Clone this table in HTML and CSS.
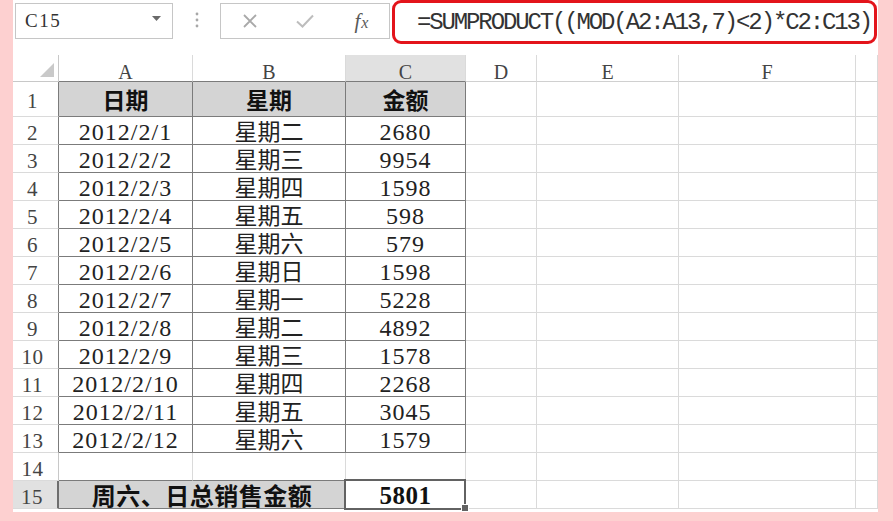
FILE: index.html
```html
<!DOCTYPE html>
<html lang="zh-CN">
<head>
<meta charset="utf-8">
<title>SUMPRODUCT</title>
<link rel="stylesheet" href="styles.css">
</head>
<body>
<div class="frame">
  <div class="panel">
    <div class="fbar">
      <div class="namebox"><span>C15</span><svg class="tri" width="9" height="5" viewBox="0 0 9 5"><polygon points="0,0 9,0 4.5,5" fill="#6a6a6a"/></svg></div>
      <div class="sep"><svg width="4" height="42" viewBox="0 0 4 42"><circle cx="2" cy="14" r="1.4" fill="#a8a8a8"/><circle cx="2" cy="20" r="1.4" fill="#a8a8a8"/><circle cx="2" cy="26" r="1.4" fill="#a8a8a8"/></svg></div>
      <div class="btns">
        <span class="btn"><svg width="16" height="16" viewBox="0 0 16 16"><path d="M2 2 L14 14 M14 2 L2 14" stroke="#a9a9a9" stroke-width="1.8" fill="none"/></svg></span>
        <span class="btn"><svg width="18" height="14" viewBox="0 0 18 14"><path d="M1 7.5 L6.5 12.5 L17 1.5" stroke="#bdbdbd" stroke-width="2" fill="none"/></svg></span>
        <span class="btn fx"><i class="f">f</i><i class="x">x</i></span>
      </div>
      <div class="formula">=SUMPRODUCT((MOD(A2:A13,7)&lt;2)*C2:C13)</div>
    </div>
    <div class="sheet">
      <div class="c corner"><svg width="14" height="14" viewBox="0 0 14 14"><polygon points="14,0 14,14 0,14" fill="#c9c9c9"/></svg></div>
      <div class="c ch tt">A</div><div class="c ch tt">B</div><div class="c ch tt csel">C</div><div class="c ch">D</div><div class="c ch">E</div><div class="c ch">F</div><div class="c ch"></div>

      <div class="c rh tl">1</div><div class="c t hd cn">日期</div><div class="c t hd cn">星期</div><div class="c t hd cn">金额</div><div class="c"></div><div class="c"></div><div class="c"></div><div class="c"></div>

      <div class="c rh tl">2</div><div class="c t num">2012/2/1</div><div class="c t cn">星期二</div><div class="c t num">2680</div><div class="c"></div><div class="c"></div><div class="c"></div><div class="c"></div>
      <div class="c rh tl">3</div><div class="c t num">2012/2/2</div><div class="c t cn">星期三</div><div class="c t num">9954</div><div class="c"></div><div class="c"></div><div class="c"></div><div class="c"></div>
      <div class="c rh tl">4</div><div class="c t num">2012/2/3</div><div class="c t cn">星期四</div><div class="c t num">1598</div><div class="c"></div><div class="c"></div><div class="c"></div><div class="c"></div>
      <div class="c rh tl">5</div><div class="c t num">2012/2/4</div><div class="c t cn">星期五</div><div class="c t num">598</div><div class="c"></div><div class="c"></div><div class="c"></div><div class="c"></div>
      <div class="c rh tl">6</div><div class="c t num">2012/2/5</div><div class="c t cn">星期六</div><div class="c t num">579</div><div class="c"></div><div class="c"></div><div class="c"></div><div class="c"></div>
      <div class="c rh tl">7</div><div class="c t num">2012/2/6</div><div class="c t cn">星期日</div><div class="c t num">1598</div><div class="c"></div><div class="c"></div><div class="c"></div><div class="c"></div>
      <div class="c rh tl">8</div><div class="c t num">2012/2/7</div><div class="c t cn">星期一</div><div class="c t num">5228</div><div class="c"></div><div class="c"></div><div class="c"></div><div class="c"></div>
      <div class="c rh tl">9</div><div class="c t num">2012/2/8</div><div class="c t cn">星期二</div><div class="c t num">4892</div><div class="c"></div><div class="c"></div><div class="c"></div><div class="c"></div>
      <div class="c rh tl">10</div><div class="c t num">2012/2/9</div><div class="c t cn">星期三</div><div class="c t num">1578</div><div class="c"></div><div class="c"></div><div class="c"></div><div class="c"></div>
      <div class="c rh tl">11</div><div class="c t num">2012/2/10</div><div class="c t cn">星期四</div><div class="c t num">2268</div><div class="c"></div><div class="c"></div><div class="c"></div><div class="c"></div>
      <div class="c rh tl">12</div><div class="c t num">2012/2/11</div><div class="c t cn">星期五</div><div class="c t num">3045</div><div class="c"></div><div class="c"></div><div class="c"></div><div class="c"></div>
      <div class="c rh tl">13</div><div class="c t num">2012/2/12</div><div class="c t cn">星期六</div><div class="c t num">1579</div><div class="c"></div><div class="c"></div><div class="c"></div><div class="c"></div>

      <div class="c rh">14</div><div class="c bb"></div><div class="c bb"></div><div class="c"></div><div class="c"></div><div class="c"></div><div class="c"></div><div class="c"></div>

      <div class="c rh rsel">15</div><div class="c t hd cn total">周六、日总销售金额</div><div class="c sum">5801</div><div class="c"></div><div class="c"></div><div class="c"></div><div class="c"></div>
    </div>
  </div>
</div>
</body>
</html>
```
FILE: styles.css
```css
body {
  margin: 0;
  background: #fdd0d0;
}

.frame {
  width: 893px;
  height: 521px;
  box-sizing: border-box;
  padding-left: 13px;
  display: flex;
}

.panel {
  width: 865px;
  height: 512px;
  background: #ffffff;
  display: flex;
  flex-direction: column;
}

/* formula bar */
.fbar {
  flex: none;
  height: 55px;
  display: flex;
  align-items: flex-start;
}

.namebox {
  margin: 3px 0 0 2px;
  width: 158px;
  height: 36px;
  box-sizing: border-box;
  border: 1px solid #c6c6c6;
  display: flex;
  align-items: center;
  justify-content: space-between;
  padding: 0 11px 0 9px;
  font: 19px "Liberation Serif", serif;
  letter-spacing: 1.5px;
  color: #333333;
}

.tri {
  margin-bottom: 6px;
}

.sep {
  width: 47px;
  height: 42px;
  display: flex;
  justify-content: center;
}

.btns {
  margin-top: 3px;
  width: 170px;
  height: 36px;
  box-sizing: border-box;
  border: 1px solid #c6c6c6;
  padding-left: 1px;
  display: flex;
  align-items: center;
}

.btn {
  width: 56px;
  display: flex;
  justify-content: center;
  align-items: center;
}

.fx {
  font-family: "Liberation Serif", serif;
  color: #595959;
  align-items: baseline;
  padding-left: 2px;
}

.fx .f {
  font-size: 21px;
}

.fx .x {
  font-size: 16px;
  margin-left: 1px;
}

.formula {
  margin-left: 2px;
  width: 485px;
  height: 44px;
  box-sizing: border-box;
  border: 3px solid #e3141b;
  border-radius: 9px;
  display: flex;
  align-items: center;
  padding-left: 22px;
  font: 24px "Liberation Mono", monospace;
  letter-spacing: -2.13px;
  color: #333333;
  white-space: nowrap;
  overflow: hidden;
}

/* sheet grid */
.sheet {
  display: grid;
  grid-template-columns: 46px 134px 153px 120px 71px 142px 177px 22px;
  grid-template-rows: 27px 35px repeat(14, 28px);
}

.c {
  box-sizing: border-box;
  border-right: 1px solid #dadada;
  border-bottom: 1px solid #dadada;
  display: flex;
  align-items: center;
  justify-content: center;
  white-space: nowrap;
  color: #1a1a1a;
}

.corner {
  justify-content: flex-end;
  align-items: flex-end;
  padding: 0 4px 4px 0;
  border-bottom-color: #c8c8c8;
  border-right-color: #c8c8c8;
}

.ch {
  font: 20px "Liberation Serif", serif;
  color: #444444;
  padding-top: 8px;
  border-bottom-color: #d0d0d0;
}

.csel {
  background: #e1e1e1;
}

.tt {
  border-bottom-color: #7b7b7b;
}

.rh {
  font: 21px "Liberation Serif", serif;
  letter-spacing: 0.6px;
  color: #444444;
  padding: 5px 6px 0 0;
  border-right-color: #c8c8c8;
}

.tl {
  border-right-color: #7b7b7b;
}

.rsel {
  background: #e1e1e1;
  border-right: 2px solid #6e6e6e;
}

.t {
  border-right-color: #7b7b7b;
  border-bottom-color: #7b7b7b;
}

.bb {
  border-bottom-color: #7b7b7b;
}

.hd {
  background: #d4d4d4;
  font-weight: bold;
  font-size: 23px;
}

.num {
  font: 24px "Liberation Serif", serif;
  letter-spacing: 1px;
  padding-top: 3px;
  color: #222222;
}

.cn {
  font-family: "Noto Sans CJK SC", sans-serif;
  font-size: 23px;
  line-height: 1;
  color: #222222;
}

.hd.cn {
  font-weight: bold;
  color: #111111;
}

.total {
  grid-column: span 2;
  font-size: 24px;
  letter-spacing: 0.5px;
}

.sum {
  position: relative;
  font: bold 25px "Liberation Serif", serif;
  letter-spacing: 0.5px;
  padding-top: 3px;
  border-bottom-color: #7b7b7b;
  color: #111111;
}

.sum::after {
  content: "";
  position: absolute;
  top: -2px;
  left: -2px;
  right: -1px;
  bottom: -2px;
  border: 2px solid #626262;
}

.sum::before {
  content: "";
  position: absolute;
  right: -4px;
  bottom: -4px;
  width: 6px;
  height: 6px;
  background: #626262;
  border: 1px solid #ffffff;
  z-index: 1;
}
```
